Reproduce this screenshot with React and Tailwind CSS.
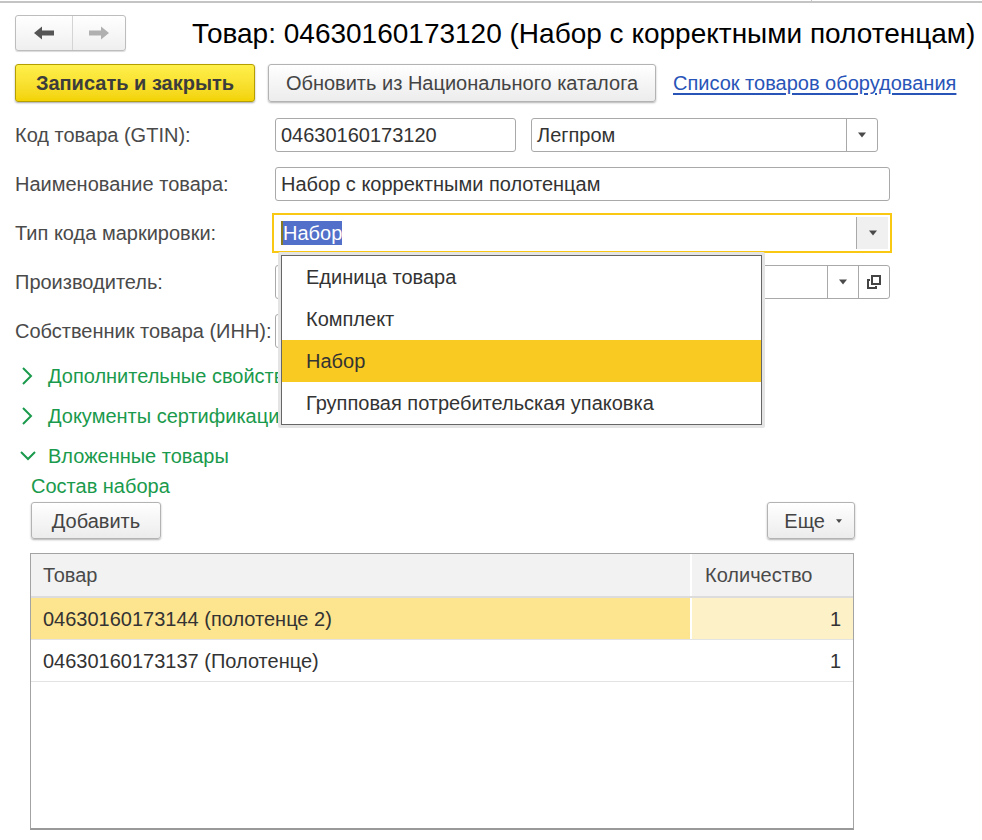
import React from 'react';

const font = { fontFamily: '"Liberation Sans", Arial, sans-serif' };

function ArrowIcon({ dir = 'left', color }) {
    return (
        <svg width="22" height="14" viewBox="0 0 22 14" style={{ transform: dir === 'right' ? 'scaleX(-1)' : 'none' }}>
            <path d="M1 7 L9 0.5 L9 4.5 L21 4.5 L21 9.5 L9 9.5 L9 13.5 Z" fill={color} />
        </svg>
    );
}

function Caret({ className = '' }) {
    return (
        <svg width="10" height="6" viewBox="0 0 10 6" className={className}>
            <path d="M1 0.5 L9 0.5 L5 5.5 Z" fill="#4a4a4a" />
        </svg>
    );
}

function Chevron({ open }) {
    return (
        <svg width="16" height="18" viewBox="0 0 16 18" className="shrink-0">
            {open
                ? <polyline points="1,5 8,12 15,5" fill="none" stroke="#1a9a4c" strokeWidth="2" />
                : <polyline points="3,1 11,9 3,17" fill="none" stroke="#1a9a4c" strokeWidth="2" />}
        </svg>
    );
}

function OpenIcon() {
    return (
        <svg width="16" height="16" viewBox="0 0 16 16">
            <rect x="6" y="2" width="8" height="8" fill="none" stroke="#444" strokeWidth="2" />
            <path d="M4 6 L2 6 L2 14 L10 14 L10 12" fill="none" stroke="#444" strokeWidth="2" />
        </svg>
    );
}

function Field({ children, className = '' }) {
    return (
        <div className={`h-[34px] border border-[#a9a9a9] rounded-[3px] bg-white flex items-center text-[20px] text-[#333] ${className}`}>
            {children}
        </div>
    );
}

function FormRow({ label, children }) {
    return (
        <div className="flex items-center h-[34px]">
            <div className="w-[260px] shrink-0 text-[20px] text-[#4a4a4a]">{label}</div>
            {children}
        </div>
    );
}

function Section({ title, open }) {
    return (
        <div className="flex items-center gap-[12px] h-[24px] pl-[20px] text-[20px] text-[#1a9a4c]">
            <Chevron open={open} />
            <span>{title}</span>
        </div>
    );
}

const btn = 'h-[37px] border border-[#b3b3b3] rounded-[3px] bg-gradient-to-b from-white to-[#ececec] shadow-[0_1px_2px_rgba(0,0,0,0.3)] flex items-center text-[20px] text-[#444]';

function App() {
    const options = ['Единица товара', 'Комплект', 'Набор', 'Групповая потребительская упаковка'];

    return (
        <div className="relative w-[982px] h-[840px] bg-white overflow-hidden" style={font}>
            <div className="h-[3px] border-b-2 border-[#c4c4c4] relative">
                <div className="absolute left-[811px] top-0 h-[3px] w-px bg-[#c4c4c4]" />
            </div>

            {/* header */}
            <div className="flex items-center pl-[15px] mt-[12px] h-[36px]">
                <div className="w-[111px] h-[36px] flex border border-[#bdbdbd] rounded-[3px] bg-gradient-to-b from-white to-[#efefef] shadow-[0_1px_1px_rgba(0,0,0,0.15)]">
                    <div className="w-[57px] flex items-center justify-center border-r border-[#d4d4d4]">
                        <ArrowIcon color="#555" />
                    </div>
                    <div className="flex-1 flex items-center justify-center">
                        <ArrowIcon dir="right" color="#b0b0b0" />
                    </div>
                </div>
                <h1 className="ml-[66px] text-[28px] text-black whitespace-nowrap leading-none mt-[2px]">Товар: 04630160173120 (Набор с корректными полотенцам)</h1>
            </div>

            {/* commands */}
            <div className="flex items-center pl-[15px] mt-[13px] h-[38px]">
                <button className="w-[240px] h-[38px] rounded-[3px] border border-[#b59f00] bg-gradient-to-b from-[#fff04a] to-[#f3d300] shadow-[0_1px_2px_rgba(0,0,0,0.35)] text-[20px] font-bold text-[#3c3c3c]">Записать и закрыть</button>
                <button className={`${btn} ml-[13px] w-[388px] h-[38px] justify-center`}>Обновить из Национального каталога</button>
                <a className="ml-[17px] text-[20px] text-[#2854b8] underline underline-offset-[3px] whitespace-nowrap">Список товаров оборудования</a>
            </div>

            {/* form */}
            <div className="flex flex-col gap-[15px] pl-[15px] mt-[16px]">
                <FormRow label="Код товара (GTIN):">
                    <Field className="w-[241px] px-[5px]">04630160173120</Field>
                    <Field className="w-[347px] ml-[15px]">
                        <span className="flex-1 pl-[5px]">Легпром</span>
                        <div className="w-[31px] h-full border-l border-[#a9a9a9] flex items-center justify-center"><Caret /></div>
                    </Field>
                </FormRow>
                <FormRow label="Наименование товара:">
                    <Field className="w-[615px] px-[5px]">Набор с корректными полотенцам</Field>
                </FormRow>
                <FormRow label="Тип кода маркировки:">
                    <div className="-ml-[3px] -my-[3px] w-[620px] h-[40px] border-2 border-[#f8c812] flex items-center p-[2px] bg-white">
                        <div className="flex-1 pl-[5px] flex items-center">
                            <span className="bg-[#5270c9] text-white text-[20px] leading-[24px] border-l-2 border-[#8a7a20]">Набор</span>
                        </div>
                        <div className="w-[32px] h-full bg-[#f0f0f0] border-l border-[#a9a9a9] flex items-center justify-center"><Caret /></div>
                    </div>
                </FormRow>
                <FormRow label="Производитель:">
                    <Field className="w-[615px]">
                        <span className="flex-1" />
                        <div className="w-[31px] h-full border-l border-[#a9a9a9] flex items-center justify-center"><Caret /></div>
                        <div className="w-[31px] h-full border-l border-[#a9a9a9] flex items-center justify-center"><OpenIcon /></div>
                    </Field>
                </FormRow>
                <FormRow label="Собственник товара (ИНН):">
                    <Field className="w-[230px]" />
                </FormRow>
            </div>

            {/* groups */}
            <div className="flex flex-col gap-[16px] mt-[16px]">
                <Section title="Дополнительные свойства" />
                <Section title="Документы сертификации" />
                <Section title="Вложенные товары" open />
            </div>

            <div className="pl-[31px] mt-[6px] text-[20px] text-[#1a9a4c] leading-[24px]">Состав набора</div>

            <div className="flex items-center justify-between pl-[31px] w-[855px] mt-[4px]">
                <button className={`${btn} w-[130px] justify-center`}>Добавить</button>
                <button className={`${btn} w-[88px] justify-end pr-[10px] gap-[9px]`}>
                    Еще <Caret className="scale-75" />
                </button>
            </div>

            {/* table */}
            <div className="ml-[30px] mt-[14px] w-[824px] h-[277px] border border-[#a3a3a3] border-b-2 border-b-[#999] text-[20px] text-[#333]">
                <div className="flex h-[44px] bg-[#f2f2f2] border-b-2 border-[#dcdcdc] text-[#4a4a4a]">
                    <div className="w-[661px] border-r-2 border-white flex items-center pl-[12px]">Товар</div>
                    <div className="flex-1 flex items-center pl-[13px]">Количество</div>
                </div>
                <div className="flex h-[42px] border-b border-[#e3e3e3]">
                    <div className="w-[661px] bg-[#fde48f] border-r-2 border-white flex items-center pl-[12px]">04630160173144 (полотенце 2)</div>
                    <div className="flex-1 bg-[#fdf1c8] flex items-center justify-end pr-[12px]">1</div>
                </div>
                <div className="flex h-[42px] border-b border-[#e3e3e3]">
                    <div className="w-[661px] flex items-center pl-[12px]">04630160173137 (Полотенце)</div>
                    <div className="flex-1 flex items-center justify-end pr-[12px]">1</div>
                </div>
            </div>

            {/* dropdown list */}
            <div className="absolute left-[278px] top-[252px] w-[487px] border-[3px] border-[#e4e4e4] rounded-[2px]">
                <div className="border border-[#666] bg-white">
                    {options.map(o => (
                        <div key={o} className={`h-[42px] flex items-center pl-[24px] text-[20px] text-[#333] ${o === 'Набор' ? 'bg-[#f9ca22]' : ''}`}>{o}</div>
                    ))}
                </div>
            </div>
        </div>
    );
}

export default App;
